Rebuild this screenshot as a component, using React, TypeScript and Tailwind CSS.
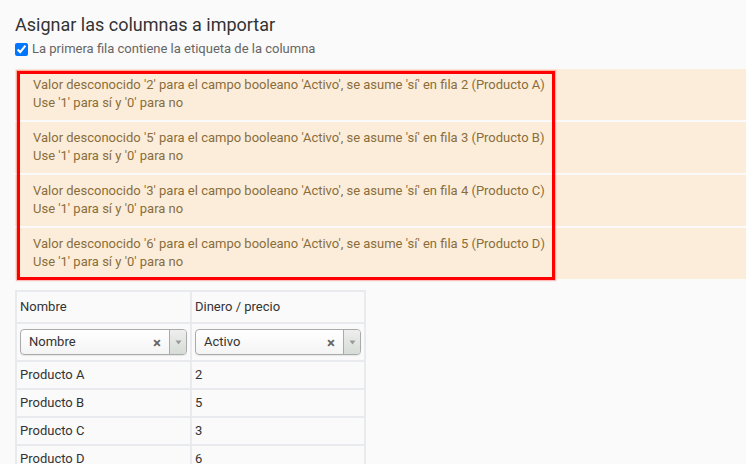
import React from "react";

const WARNINGS = [
  { value: "2", row: 2, product: "Producto A" },
  { value: "5", row: 3, product: "Producto B" },
  { value: "3", row: 4, product: "Producto C" },
  { value: "6", row: 5, product: "Producto D" },
];

const ROWS = [
  ["Producto A", "2"],
  ["Producto B", "5"],
  ["Producto C", "3"],
  ["Producto D", "6"],
];

function ColumnSelect({ value }: { value: string }) {
  return (
    <div className="flex h-[26px] items-stretch rounded-[4px] border border-[#aaa] bg-gradient-to-b from-white to-[#f4f4f4] shadow-[0_1px_1px_rgba(0,0,0,0.08)]">
      <span className="flex-1 pl-[8px] leading-[24px] text-[13px] text-[#333]">{value}</span>
      <span className="flex w-[24px] items-center justify-center pt-[2px] text-[15px] font-bold leading-none text-[#666]">×</span>
      <span className="flex w-[17px] items-center justify-center rounded-r-[3px] border-l border-[#aaa] bg-gradient-to-b from-[#eee] to-[#d6dcd6]">
        <svg width="7" height="5" viewBox="0 0 7 5">
          <path d="M0.5 0.5 L6.5 0.5 L3.5 4.5 Z" fill="#999" />
        </svg>
      </span>
    </div>
  );
}

export default function App() {
  return (
    <div className="min-h-screen w-full overflow-hidden bg-[#fafafa] font-['Roboto',sans-serif] text-[#333]">
      <div className="pl-[15px] pt-[13px]">
        <h3 className="text-[18px] leading-[24px] text-[#333]">Asignar las columnas a importar</h3>
        <label className="mt-[3px] flex items-center gap-[4px] text-[13px] leading-[18px] text-[#666]">
          <input type="checkbox" defaultChecked className="m-0 h-[13px] w-[13px] accent-[#0075ff]" />
          La primera fila contiene la etiqueta de la columna
        </label>

        {/* Warning list with red highlight */}
        <div className="relative mt-[11px] flex w-[800px] flex-col gap-[2px]">
          {WARNINGS.map((w) => (
            <div
              key={w.value}
              className="h-[51px] bg-[#fcedda] pl-[18px] pt-[7px] text-[13px] leading-[18px] text-[#8a6d3b]"
            >
              <div>
                Valor desconocido '{w.value}' para el campo booleano 'Activo', se asume 'sí' en fila {w.row} ({w.product})
              </div>
              <div>Use '1' para sí y '0' para no</div>
            </div>
          ))}
          <div className="pointer-events-none absolute left-[2px] top-[2px] h-[209px] w-[538px] border-[3px] border-[#ff0000] shadow-[0_0_1px_1px_rgba(255,0,0,0.25)]" />
        </div>

        {/* Column mapping table */}
        <table className="mt-[11px] w-[351px] border-collapse text-[13px] text-[#333]">
          <tbody>
            <tr className="h-[32px]">
              <td className="w-[175px] border-2 border-[#e8eaee] px-[3px]">Nombre</td>
              <td className="border-2 border-[#e8eaee] px-[3px]">Dinero / precio</td>
            </tr>
            <tr className="h-[38px]">
              <td className="border-2 border-[#e8eaee] px-[3px]">
                <ColumnSelect value="Nombre" />
              </td>
              <td className="border-2 border-[#e8eaee] px-[3px]">
                <ColumnSelect value="Activo" />
              </td>
            </tr>
            {ROWS.map(([name, val]) => (
              <tr key={name} className="h-[28px]">
                <td className="border-2 border-[#e8eaee] px-[3px]">{name}</td>
                <td className="border-2 border-[#e8eaee] px-[3px]">{val}</td>
              </tr>
            ))}
          </tbody>
        </table>
      </div>
    </div>
  );
}
